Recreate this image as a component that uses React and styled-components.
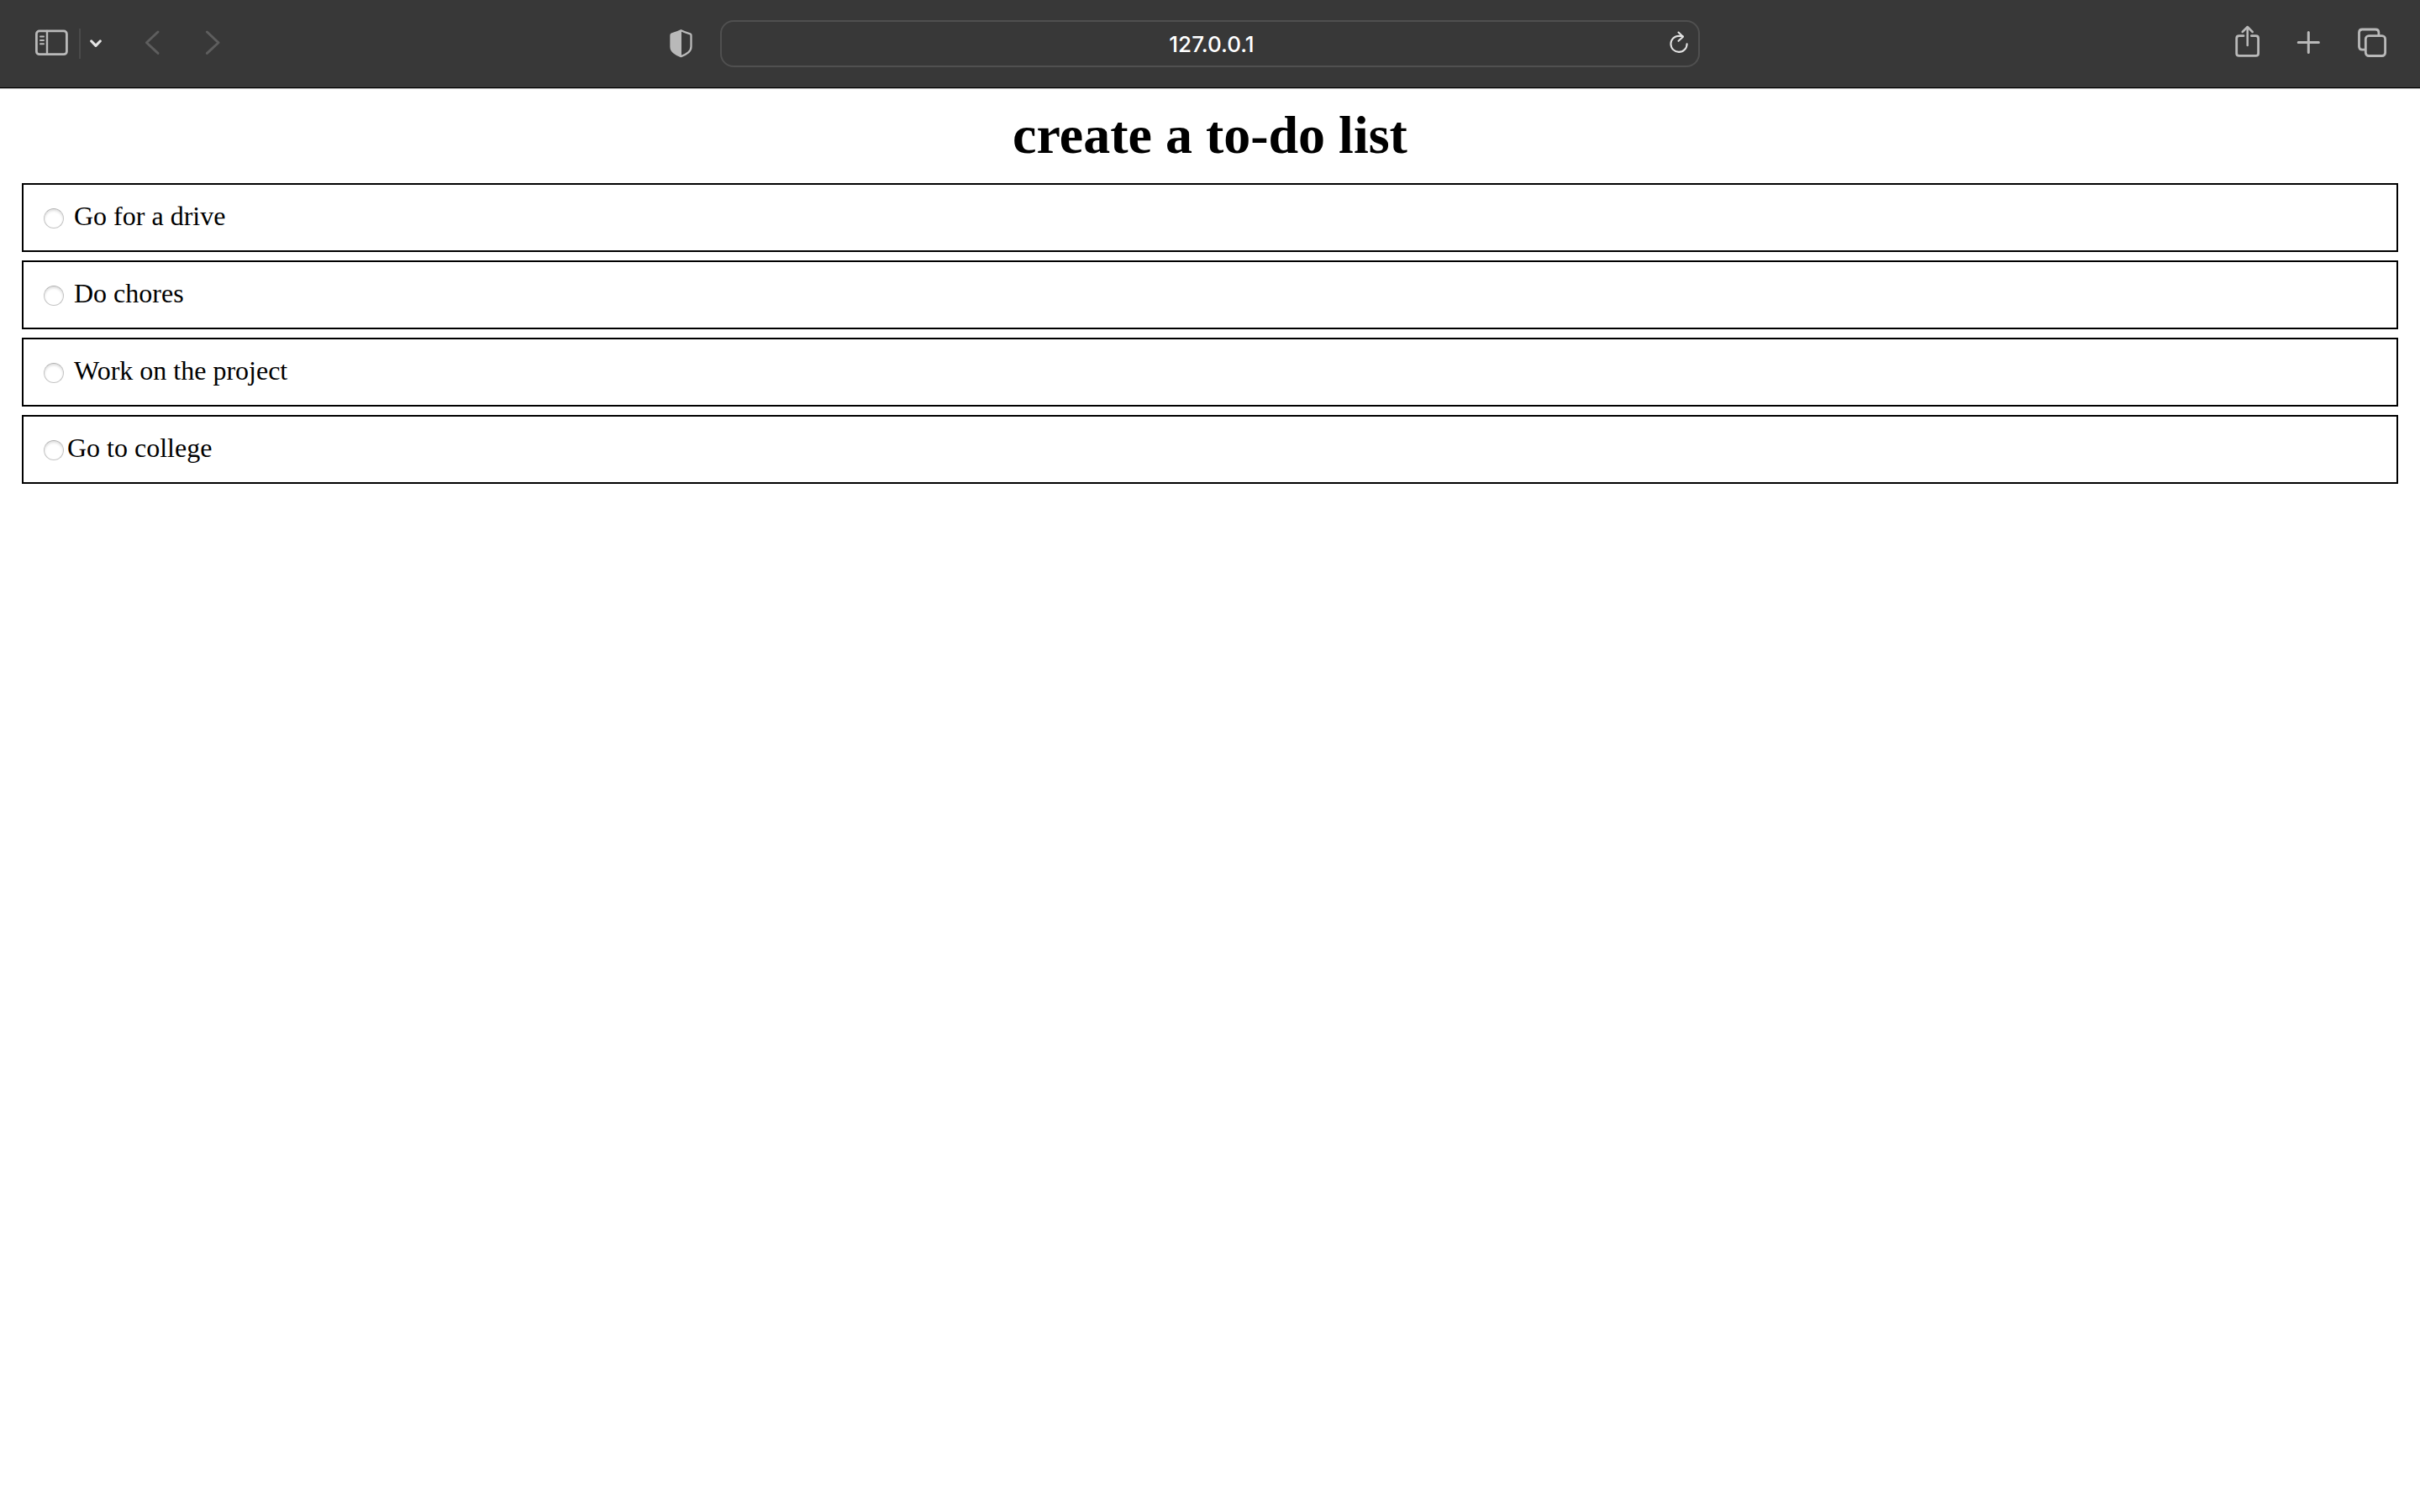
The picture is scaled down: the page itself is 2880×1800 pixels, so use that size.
import React, { useState } from "react";
import styled, { createGlobalStyle } from "styled-components";

const GlobalStyle = createGlobalStyle`
  * { box-sizing: border-box; }
  body {
    margin: 0;
    background: #ffffff;
    color: #000000;
    font-family: "Liberation Serif", "Times New Roman", serif;
  }
`;

const Toolbar = styled.header`
  display: grid;
  grid-template-columns: 1fr minmax(0, 1166px) 1fr;
  align-items: center;
  padding: 24px 40px;
  background: #383838;
  border-bottom: 1px solid #000000;
  box-shadow: 0 1px 0 #bdbdbd;
`;

const ToolGroup = styled.div`
  display: flex;
  align-items: center;
  justify-content: ${(p) => p.$justify || "flex-start"};
  gap: ${(p) => p.$gap}px;
`;

const ToolButton = styled.button`
  display: block;
  flex: none;
  margin: 0;
  padding: 0;
  border: 0;
  background: none;
  color: ${(p) => p.$color || "#b9b9b9"};
`;

const ShieldButton = styled(ToolButton)`
  margin-left: auto;
  margin-right: 31px;
`;

const Glyph = styled.svg`
  display: block;
  fill: none;
  stroke: currentColor;
  stroke-width: ${(p) => p.$weight || 2.8};
  stroke-linecap: round;
  stroke-linejoin: round;
`;

const Divider = styled.span`
  width: 2px;
  height: 36px;
  background: #4a4a4a;
`;

const AddressBar = styled.form`
  display: flex;
  align-items: center;
  height: 56px;
  padding: 0 10px 0 38px;
  border: 2px solid #505050;
  border-radius: 16px;
`;

const AddressInput = styled.input`
  flex: 1;
  min-width: 0;
  height: 100%;
  padding: 0;
  border: 0;
  outline: 0;
  background: none;
  color: #ffffff;
  font-family: Inter, sans-serif;
  font-size: 26px;
  font-weight: 500;
  text-align: center;
`;

const Page = styled.main`
  padding: 20px 26px;
`;

const Title = styled.h1`
  margin: 0 0 21px;
  font-size: 64px;
  line-height: 72px;
  font-weight: 700;
  text-align: center;
`;

const TodoList = styled.ul`
  display: flex;
  flex-direction: column;
  gap: 10px;
  margin: 0;
  padding: 0;
  list-style: none;
`;

const TodoItem = styled.li`
  display: flex;
  align-items: center;
  padding: 19px 24px 23px;
  border: 2px solid #000000;
  font-size: 32px;
  line-height: 36px;
`;

const TodoRadio = styled.input`
  appearance: none;
  flex: none;
  width: 24px;
  height: 24px;
  margin: 6px ${(p) => (p.$tight ? 4 : 12)}px 0 0;
  border: 1px solid #c4c4c4;
  border-top-color: #b0b0b0;
  border-radius: 50%;
  background: #ffffff;
  box-shadow: inset 0 2px 3px rgba(0, 0, 0, 0.13);

  &:checked {
    background: radial-gradient(circle, #007aff 40%, #ffffff 45%);
  }
`;

const todos = [
  { id: "drive", text: "Go for a drive" },
  { id: "chores", text: "Do chores" },
  { id: "project", text: "Work on the project" },
  { id: "college", text: "Go to college", tight: true },
];

function Icon({ width, weight, children }) {
  return (
    <Glyph width={width} height="56" viewBox={`0 0 ${width} 56`} $weight={weight} aria-hidden="true">
      {children}
    </Glyph>
  );
}

function BrowserToolbar() {
  const [address, setAddress] = useState("127.0.0.1");
  return (
    <Toolbar>
      <ToolGroup $gap={50}>
        <ToolGroup $gap={11}>
          <ToolButton type="button" aria-label="Show sidebar">
            <Icon width={43}>
              <rect x="3.4" y="12.9" width="36" height="27.8" rx="3.5" />
              <path d="M16 12.9v27.8" strokeWidth="2.4" />
              <path d="M8 19.5h4M8 24h4M8 28.3h4" strokeWidth="2" />
            </Icon>
          </ToolButton>
          <Divider />
          <ToolButton type="button" aria-label="Tab groups" $color="#e4e4e4">
            <Icon width={14} weight={3.2}>
              <path d="M1.8 25l5.2 5.3 5.2-5.3" />
            </Icon>
          </ToolButton>
        </ToolGroup>
        <ToolGroup $gap={52}>
          <ToolButton type="button" aria-label="Back" $color="#5e5e5e">
            <Icon width={20} weight={2.9}>
              <path d="M17 14L3.4 26.8 17 39.4" />
            </Icon>
          </ToolButton>
          <ToolButton type="button" aria-label="Forward" $color="#5e5e5e">
            <Icon width={20} weight={2.9}>
              <path d="M3.4 14L17 26.8 3.4 39.4" />
            </Icon>
          </ToolButton>
        </ToolGroup>
        <ShieldButton type="button" aria-label="Privacy report">
          <Icon width={30} weight={2.3}>
            <path d="M14.5 12.3C17.5 13.9 21.5 15.3 25.3 16.3Q26.5 16.8 26.5 18V31.5Q26.5 35.5 23.2 38.3C20.5 40.5 17.8 42 14.5 43.2C11.2 42 8.5 40.5 5.8 38.3Q2.5 35.5 2.5 31.5V18Q2.5 16.8 3.7 16.3C7.5 15.3 11.5 13.9 14.5 12.3Z" />
            <path d="M14.5 12.3V43.2C11.2 42 8.5 40.5 5.8 38.3Q2.5 35.5 2.5 31.5V18Q2.5 16.8 3.7 16.3C7.5 15.3 11.5 13.9 14.5 12.3Z" fill="currentColor" strokeWidth="1" />
          </Icon>
        </ShieldButton>
      </ToolGroup>

      <AddressBar onSubmit={(e) => e.preventDefault()}>
        <AddressInput
          type="text"
          aria-label="Address"
          value={address}
          onChange={(e) => setAddress(e.target.value)}
        />
        <ToolButton type="button" aria-label="Reload" $color="#e2e2e2">
          <Icon width={24} weight={2.1}>
            <path d="M20.6 28.2A9.6 9.6 0 1 1 11 18.7L15.5 19" />
            <path d="M10.5 14.5L16 19.7 10.5 24.8" />
          </Icon>
        </ToolButton>
      </AddressBar>

      <ToolGroup $gap={42} $justify="flex-end">
        <ToolButton type="button" aria-label="Share">
          <Icon width={30}>
            <path d="M10 18.7H4.7Q1.7 18.7 1.7 21.7V39.4Q1.7 42.4 4.7 42.4H24.6Q27.6 42.4 27.6 39.4V21.7Q27.6 18.7 24.6 18.7H19.4" />
            <path d="M14.7 30V8.5M8.7 14l6-6 6 6" strokeWidth="2.5" />
          </Icon>
        </ToolButton>
        <ToolButton type="button" aria-label="New tab">
          <Icon width={29} weight={3}>
            <path d="M15.3 14.4v24.2M3.2 26.5h24.2" />
          </Icon>
        </ToolButton>
        <ToolButton type="button" aria-label="Show all tabs">
          <Icon width={37}>
            <path d="M11 35.2H8.2Q4.5 35.2 4.5 31.3V14.9Q4.5 11 8.2 11H24Q27.9 11 27.9 14.9V18" />
            <rect x="12.3" y="18.7" width="23.3" height="23.8" rx="3.8" />
          </Icon>
        </ToolButton>
      </ToolGroup>
    </Toolbar>
  );
}

export default function App() {
  return (
    <>
      <GlobalStyle />
      <BrowserToolbar />
      <Page>
        <Title>create a to-do list</Title>
        <TodoList>
          {todos.map((todo) => (
            <TodoItem key={todo.id}>
              <TodoRadio type="radio" id={todo.id} name={todo.id} $tight={todo.tight} />
              <label htmlFor={todo.id}>{todo.text}</label>
            </TodoItem>
          ))}
        </TodoList>
      </Page>
    </>
  );
}
